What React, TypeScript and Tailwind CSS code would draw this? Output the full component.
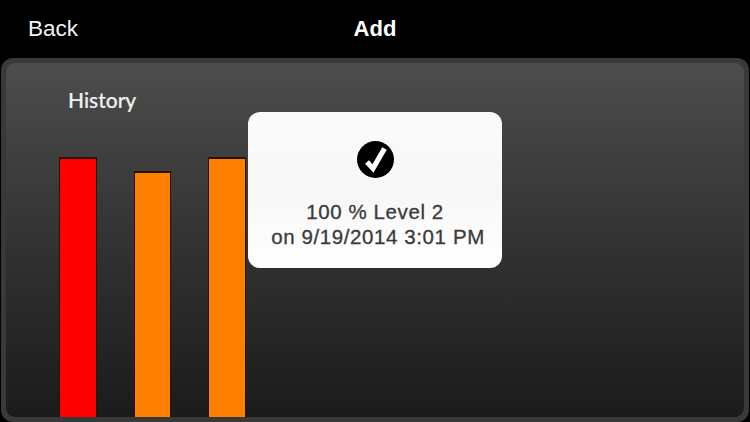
const bars = [
  { id: 'a', height: 'h-[260px]', width: 'w-[38px]', color: 'bg-[#ff0000]' },
  { id: 'b', height: 'h-[246px]', width: 'w-[37px]', color: 'bg-[#ff8000]' },
  { id: 'c', height: 'h-[260px]', width: 'w-[38px]', color: 'bg-[#ff8000]' },
];

export default function App() {
  return (
    <div className="relative flex h-[422px] w-[750px] flex-col overflow-hidden bg-black font-['Liberation_Sans',sans-serif] text-white">
      <header className="relative flex h-[58px] shrink-0 items-center justify-center">
        <span className="absolute left-[28px] top-[15px] text-[22.5px] leading-[28px] text-[#f4f4f4]">Back</span>
        <h1 className="text-[22px] font-bold leading-[28px]">Add</h1>
      </header>

      <main className="mx-px flex min-h-0 flex-1 rounded-[12px] bg-[#393939] px-[5px] pb-[5px] pt-[5px]">
        <section className="flex min-h-0 flex-1 flex-col rounded-[9px] bg-gradient-to-b from-[#4d4d4d] to-[#1b1b1b]">
          <h2 className="ml-[62px] mt-[24px] font-['Lato',sans-serif] text-[21px] font-medium leading-[26px] text-[#f0f0f0] [-webkit-text-stroke:0.2px_#f0f0f0]">
            History
          </h2>
          <div className="ml-[53px] mt-auto flex items-end gap-[37px]">
            {bars.map((bar) => (
              <div
                key={bar.id}
                className={`border-x-[1.5px] border-t-2 border-[#2a1200] ${bar.width} ${bar.height} ${bar.color}`}
              />
            ))}
          </div>
        </section>
      </main>

      <div className="absolute left-[248px] top-[112px] flex h-[156px] w-[254px] flex-col items-center rounded-[12px] bg-gradient-to-b from-[#fbfbfb] via-[#f7f7f7] to-[#ffffff]">
        <div className="mt-[29px] flex h-[37px] w-[37px] items-center justify-center rounded-full bg-black">
          <svg viewBox="0 0 37 37" className="h-[37px] w-[37px]">
            <path d="M10 21 L16 27.5 L27.5 7.5" fill="none" stroke="#fff" strokeWidth="5.2" strokeLinejoin="miter" />
          </svg>
        </div>
        <p className="mt-[21px] text-center text-[20.5px] leading-[25px] tracking-[0.6px] text-[#3a3a3a] [-webkit-text-stroke:0.3px_#3a3a3a]">
          100 % Level 2
          <br />
          <span className="ml-[6px]">on 9/19/2014 3:01 PM</span>
        </p>
      </div>
    </div>
  );
}
